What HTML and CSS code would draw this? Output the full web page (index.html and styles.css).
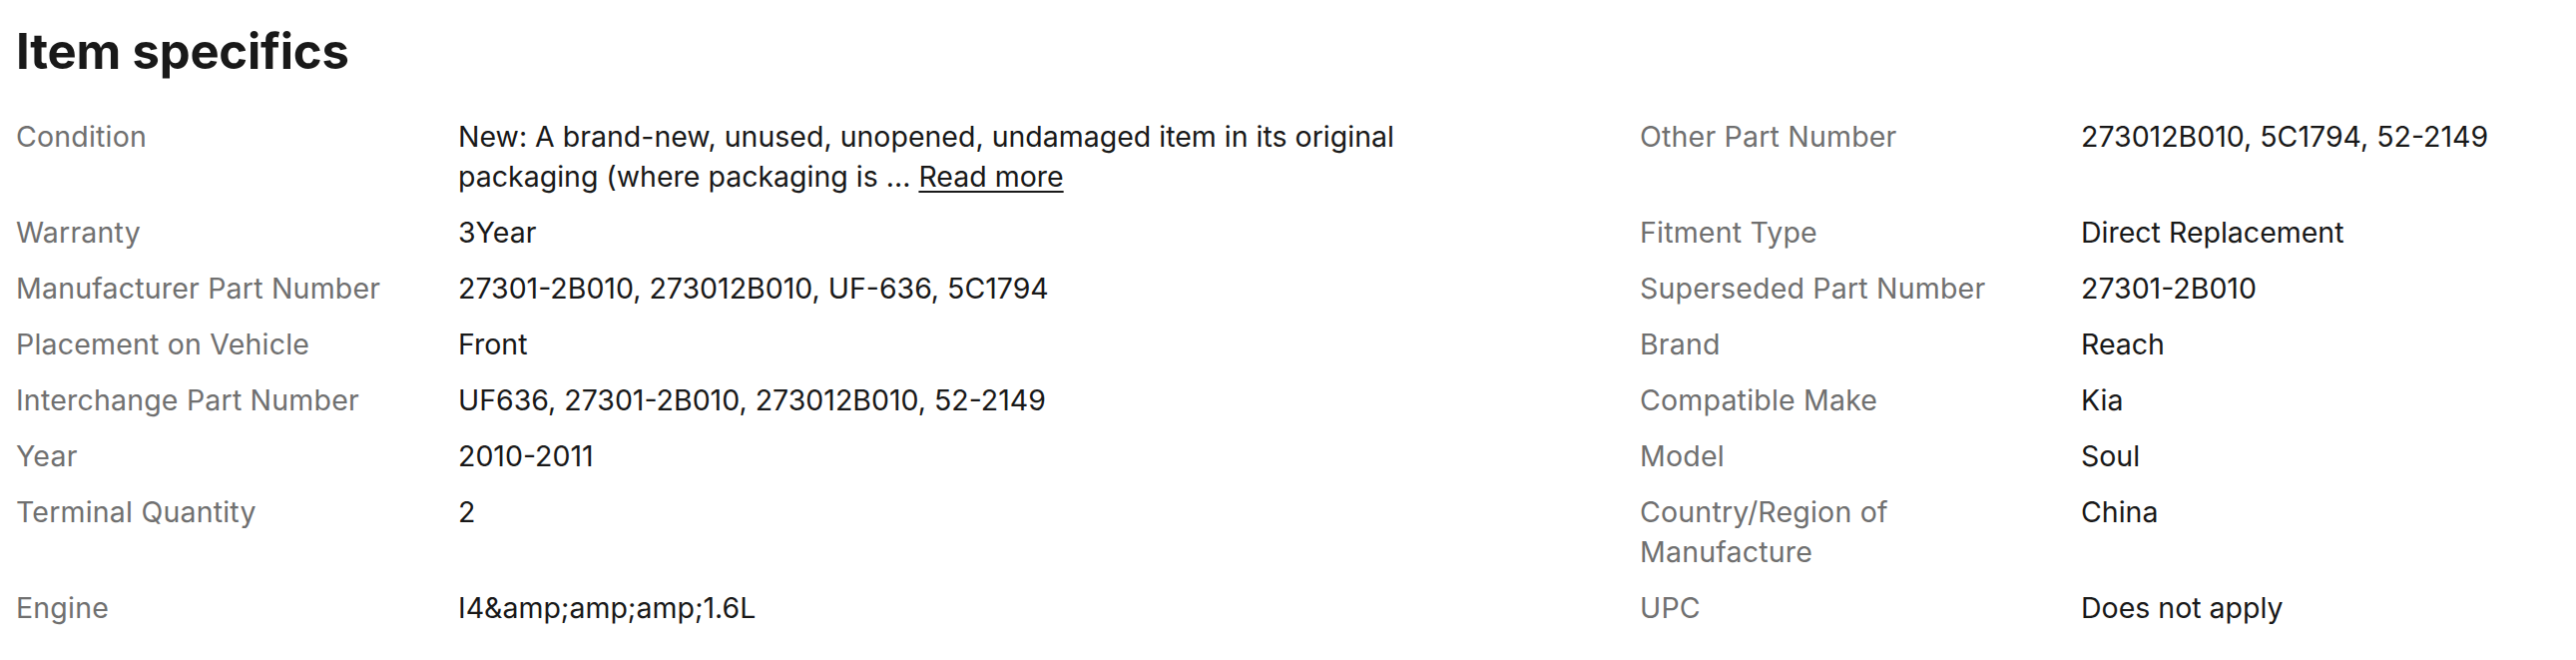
FILE: index.html
```html
<!DOCTYPE html>
<html lang="en">
<head>
<meta charset="utf-8">
<title>Item specifics</title>
<link rel="stylesheet" href="styles.css">
</head>
<body>
<section class="specifics">
  <h2 class="specifics__title">Item specifics</h2>
  <div class="specifics__grid">
    <div class="spec-label">Condition</div>
    <div class="spec-value spec-value--left">New: A brand-new, unused, unopened, undamaged item in its original packaging (where packaging is ... <a class="read-more" href="#">Read more</a></div>
    <div class="spec-label">Other Part Number</div>
    <div class="spec-value">273012B010, 5C1794, 52-2149</div>

    <div class="spec-label">Warranty</div>
    <div class="spec-value spec-value--left">3Year</div>
    <div class="spec-label">Fitment Type</div>
    <div class="spec-value">Direct Replacement</div>

    <div class="spec-label">Manufacturer Part Number</div>
    <div class="spec-value spec-value--left">27301-2B010, 273012B010, UF-636, 5C1794</div>
    <div class="spec-label">Superseded Part Number</div>
    <div class="spec-value">27301-2B010</div>

    <div class="spec-label">Placement on Vehicle</div>
    <div class="spec-value spec-value--left">Front</div>
    <div class="spec-label">Brand</div>
    <div class="spec-value">Reach</div>

    <div class="spec-label">Interchange Part Number</div>
    <div class="spec-value spec-value--left">UF636, 27301-2B010, 273012B010, 52-2149</div>
    <div class="spec-label">Compatible Make</div>
    <div class="spec-value">Kia</div>

    <div class="spec-label">Year</div>
    <div class="spec-value spec-value--left">2010-2011</div>
    <div class="spec-label">Model</div>
    <div class="spec-value">Soul</div>

    <div class="spec-label">Terminal Quantity</div>
    <div class="spec-value spec-value--left">2</div>
    <div class="spec-label">Country/Region of<br>Manufacture</div>
    <div class="spec-value">China</div>

    <div class="spec-label">Engine</div>
    <div class="spec-value spec-value--left">I4&amp;amp;amp;amp;1.6L</div>
    <div class="spec-label">UPC</div>
    <div class="spec-value">Does not apply</div>
  </div>
</section>
</body>
</html>
```
FILE: styles.css
```css
html, body {
  margin: 0;
  padding: 0;
  background: #ffffff;
}

body {
  font-family: "Inter", "Liberation Sans", sans-serif;
  color: #191919;
}

.specifics {
  padding: 24px 16px 0 16px;
}

.specifics__title {
  margin: 0;
  font-size: 49px;
  line-height: 56px;
  font-weight: 700;
  color: #191919;
  letter-spacing: -0.2px;
}

.specifics__grid {
  margin-top: 37px;
  display: grid;
  grid-template-columns: 443px 1184px 442px 1fr;
  row-gap: 16px;
  font-size: 28.5px;
  line-height: 40px;
}

.spec-label {
  color: #707070;
  letter-spacing: 0.2px;
}

.spec-value {
  color: #191919;
}

.spec-value--left {
  padding-right: 184px;
}

.read-more {
  color: #191919;
  text-decoration: underline;
  text-underline-offset: 4px;
  text-decoration-thickness: 2px;
}
```
